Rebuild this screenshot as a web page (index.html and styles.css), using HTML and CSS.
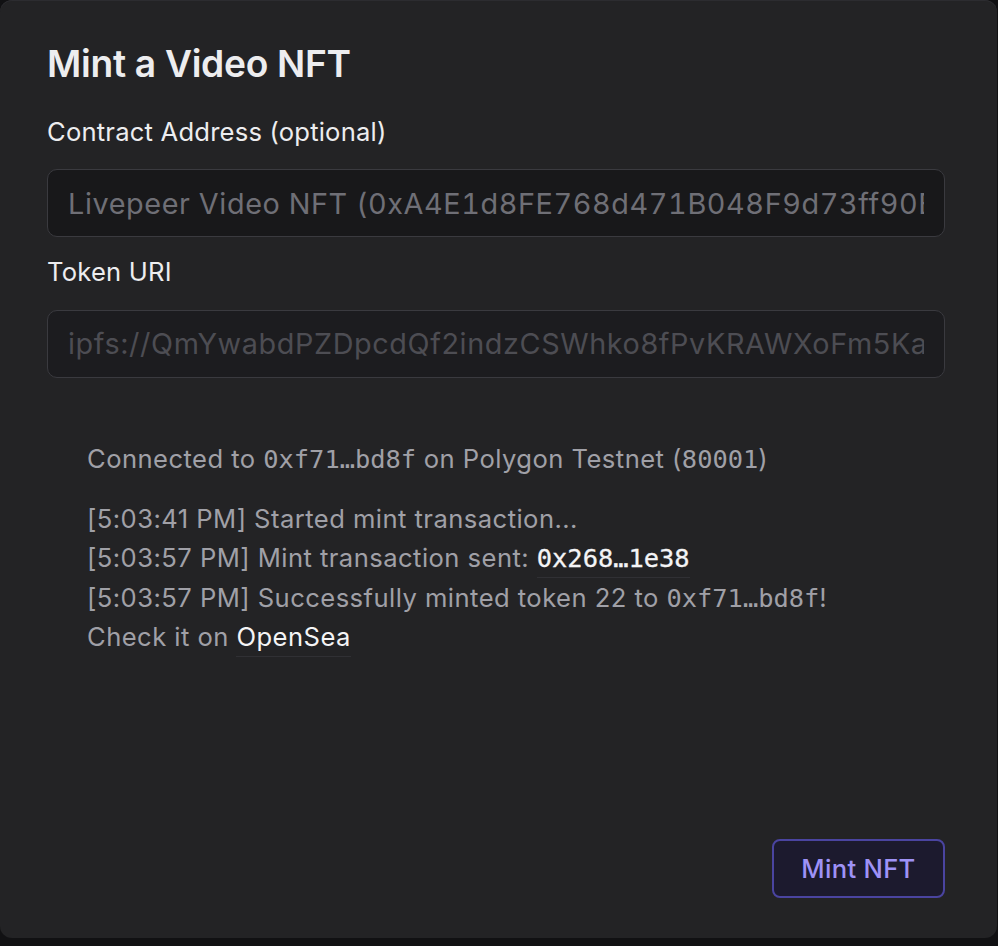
FILE: index.html
```html
<!DOCTYPE html>
<html lang="en">
<head>
<meta charset="utf-8">
<title>Mint a Video NFT</title>
<link rel="stylesheet" href="styles.css">
</head>
<body>
<div class="card">
  <h1 class="title">Mint a Video NFT</h1>
  <div class="field">
    <label class="label">Contract Address (optional)</label>
    <div class="input input-filled"><span class="input-text">Livepeer Video NFT (0xA4E1d8FE768d471B048F9d73ff90B)</span></div>
  </div>
  <div class="field">
    <label class="label">Token URI</label>
    <div class="input input-placeholder"><span class="input-text">ipfs://QmYwabdPZDpcdQf2indzCSWhko8fPvKRAWXoFm5Ka</span></div>
  </div>
  <div class="log">
    <p class="connected">Connected to <span class="mono">0xf71…bd8f</span> on Polygon Testnet (<span class="mono">80001</span>)</p>
    <div class="lines">
      <p>[5:03:41 PM] Started mint transaction...</p>
      <p>[5:03:57 PM] Mint transaction sent: <a class="mono link hash">0x268…1e38</a></p>
      <p>[5:03:57 PM] Successfully minted token 22 to <span class="mono">0xf71…bd8f</span>!</p>
      <p>Check it on <a class="link">OpenSea</a></p>
    </div>
  </div>
  <div class="actions">
    <button class="btn">Mint NFT</button>
  </div>
</div>
</body>
</html>
```

FILE: styles.css
```css
* { box-sizing: border-box; }
html, body {
  margin: 0;
  padding: 0;
  background: #111113;
  height: 100%;
}
body {
  font-family: Inter, "Noto Sans", sans-serif;
  color: #ededef;
}
.card {
  width: 997px;
  height: 938px;
  background: #232325;
  border-radius: 12px;
  box-shadow: inset 0 1px 0 #2c2c30;
  padding: 41px 52px 40px 47px;
  display: flex;
  flex-direction: column;
}
.title {
  margin: 0 0 26px;
  font-size: 37.2px;
  line-height: 46px;
  font-weight: 600;
  letter-spacing: -0.3px;
  color: #ededef;
}
.field {
  display: flex;
  flex-direction: column;
  margin-bottom: 16px;
}
.label {
  font-size: 25.6px;
  line-height: 38.4px;
  font-weight: 400;
  letter-spacing: 0.2px;
  color: #ededef;
  margin-bottom: 18px;
}
.input {
  height: 68px;
  border: 1.5px solid #3a3a3f;
  border-radius: 10px;
  padding: 0 20px;
  display: flex;
  align-items: center;
  font-size: 28.8px;
  letter-spacing: 0.6px;
  white-space: nowrap;
  overflow: hidden;
}
.input-text {
  display: block;
  min-width: 0;
  overflow: hidden;
  text-overflow: clip;
}
.input-filled {
  background: #18181a;
  color: #6f6f76;
  font-variant-numeric: tabular-nums;
}
.input-placeholder {
  background: #1c1c1f;
  color: #4d4d53;
}
.log {
  padding: 45px 40px 0;
  font-size: 25.6px;
  line-height: 39.4px;
  letter-spacing: 0.45px;
  color: #a0a0a7;
}
.log p {
  margin: 0;
  height: 39.4px;
  white-space: nowrap;
}
.connected { margin-bottom: 20.6px !important; }
.mono {
  font-family: "DejaVu Sans Mono", "Liberation Mono", monospace;
  font-size: 25.4px;
  letter-spacing: 0;
  line-height: 1;
}
.link {
  color: #f4f4f6;
  text-decoration: none;
  border-bottom: 1.5px solid #303034;
  padding-bottom: 4px;
}
.hash {
  font-weight: 400;
  -webkit-text-stroke: 0.3px #f4f4f6;
}
.actions {
  margin-top: auto;
  display: flex;
  justify-content: flex-end;
}
.btn {
  width: 173px;
  height: 59px;
  background: #1c1a2e;
  border: 2px solid #4a44a0;
  border-radius: 8px;
  color: #9e92f6;
  font-family: Inter, "Noto Sans", sans-serif;
  font-size: 25.6px;
  font-weight: 500;
  letter-spacing: 0.3px;
  padding: 0;
}
```
